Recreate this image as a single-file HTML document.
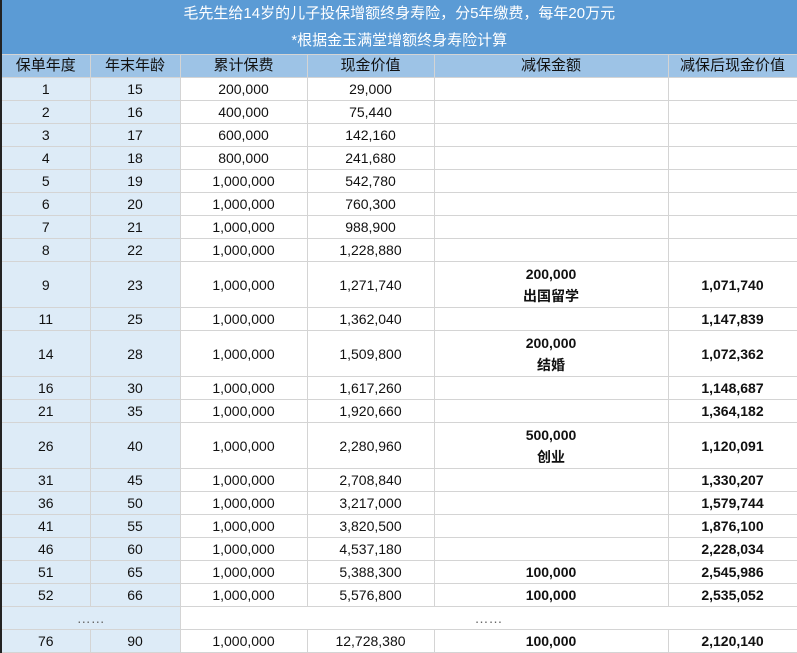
<!DOCTYPE html>
<html><head><meta charset="utf-8"><style>
html,body{margin:0;padding:0;background:#fff}
body{width:797px;height:653px;overflow:hidden;font-family:"Liberation Sans","Noto Sans CJK SC",sans-serif;font-size:14px;color:#111}
table{border-collapse:collapse;table-layout:fixed;width:797px;border-left:2px solid #222;border-right:1px solid #444;border-bottom:1px solid #444}
td{border:1px solid #d4d4d4;text-align:center;padding:0;height:22px;line-height:16px;overflow:hidden;white-space:nowrap}
tr.t td{background:#5b9bd5;color:#fff;border:none;font-size:15px;height:27px}
tr.h td{background:#9dc3e6;font-size:15px;height:22px}
td.a,td.b{background:#ddebf7}
tr.tall td{height:45px}
td.x,td.y{font-weight:bold}
td.x{line-height:22px}
</style></head><body>
<table>
<colgroup><col style="width:89px"><col style="width:90px"><col style="width:127px"><col style="width:127px"><col style="width:234px"><col style="width:129px"></colgroup>
<tr class="t"><td colspan="6">毛先生给14岁的儿子投保增额终身寿险，分5年缴费，每年20万元</td></tr>
<tr class="t"><td colspan="6">*根据金玉满堂增额终身寿险计算</td></tr>
<tr class="h"><td>保单年度</td><td>年末年龄</td><td>累计保费</td><td>现金价值</td><td>减保金额</td><td>减保后现金价值</td></tr>
<tr><td class="a">1</td><td class="b">15</td><td>200,000</td><td>29,000</td><td></td><td></td></tr>
<tr><td class="a">2</td><td class="b">16</td><td>400,000</td><td>75,440</td><td></td><td></td></tr>
<tr><td class="a">3</td><td class="b">17</td><td>600,000</td><td>142,160</td><td></td><td></td></tr>
<tr><td class="a">4</td><td class="b">18</td><td>800,000</td><td>241,680</td><td></td><td></td></tr>
<tr><td class="a">5</td><td class="b">19</td><td>1,000,000</td><td>542,780</td><td></td><td></td></tr>
<tr><td class="a">6</td><td class="b">20</td><td>1,000,000</td><td>760,300</td><td></td><td></td></tr>
<tr><td class="a">7</td><td class="b">21</td><td>1,000,000</td><td>988,900</td><td></td><td></td></tr>
<tr><td class="a">8</td><td class="b">22</td><td>1,000,000</td><td>1,228,880</td><td></td><td></td></tr>
<tr class="tall"><td class="a">9</td><td class="b">23</td><td>1,000,000</td><td>1,271,740</td><td class="x">200,000<br>出国留学</td><td class="y">1,071,740</td></tr>
<tr><td class="a">11</td><td class="b">25</td><td>1,000,000</td><td>1,362,040</td><td></td><td class="y">1,147,839</td></tr>
<tr class="tall"><td class="a">14</td><td class="b">28</td><td>1,000,000</td><td>1,509,800</td><td class="x">200,000<br>结婚</td><td class="y">1,072,362</td></tr>
<tr><td class="a">16</td><td class="b">30</td><td>1,000,000</td><td>1,617,260</td><td></td><td class="y">1,148,687</td></tr>
<tr><td class="a">21</td><td class="b">35</td><td>1,000,000</td><td>1,920,660</td><td></td><td class="y">1,364,182</td></tr>
<tr class="tall"><td class="a">26</td><td class="b">40</td><td>1,000,000</td><td>2,280,960</td><td class="x">500,000<br>创业</td><td class="y">1,120,091</td></tr>
<tr><td class="a">31</td><td class="b">45</td><td>1,000,000</td><td>2,708,840</td><td></td><td class="y">1,330,207</td></tr>
<tr><td class="a">36</td><td class="b">50</td><td>1,000,000</td><td>3,217,000</td><td></td><td class="y">1,579,744</td></tr>
<tr><td class="a">41</td><td class="b">55</td><td>1,000,000</td><td>3,820,500</td><td></td><td class="y">1,876,100</td></tr>
<tr><td class="a">46</td><td class="b">60</td><td>1,000,000</td><td>4,537,180</td><td></td><td class="y">2,228,034</td></tr>
<tr><td class="a">51</td><td class="b">65</td><td>1,000,000</td><td>5,388,300</td><td class="y">100,000</td><td class="y">2,545,986</td></tr>
<tr><td class="a">52</td><td class="b">66</td><td>1,000,000</td><td>5,576,800</td><td class="y">100,000</td><td class="y">2,535,052</td></tr>
<tr><td class="a" colspan="2" style="color:#666">……</td><td colspan="4" style="color:#666">……</td></tr>
<tr><td class="a">76</td><td class="b">90</td><td>1,000,000</td><td>12,728,380</td><td class="y">100,000</td><td class="y">2,120,140</td></tr>
</table>
</body></html>
